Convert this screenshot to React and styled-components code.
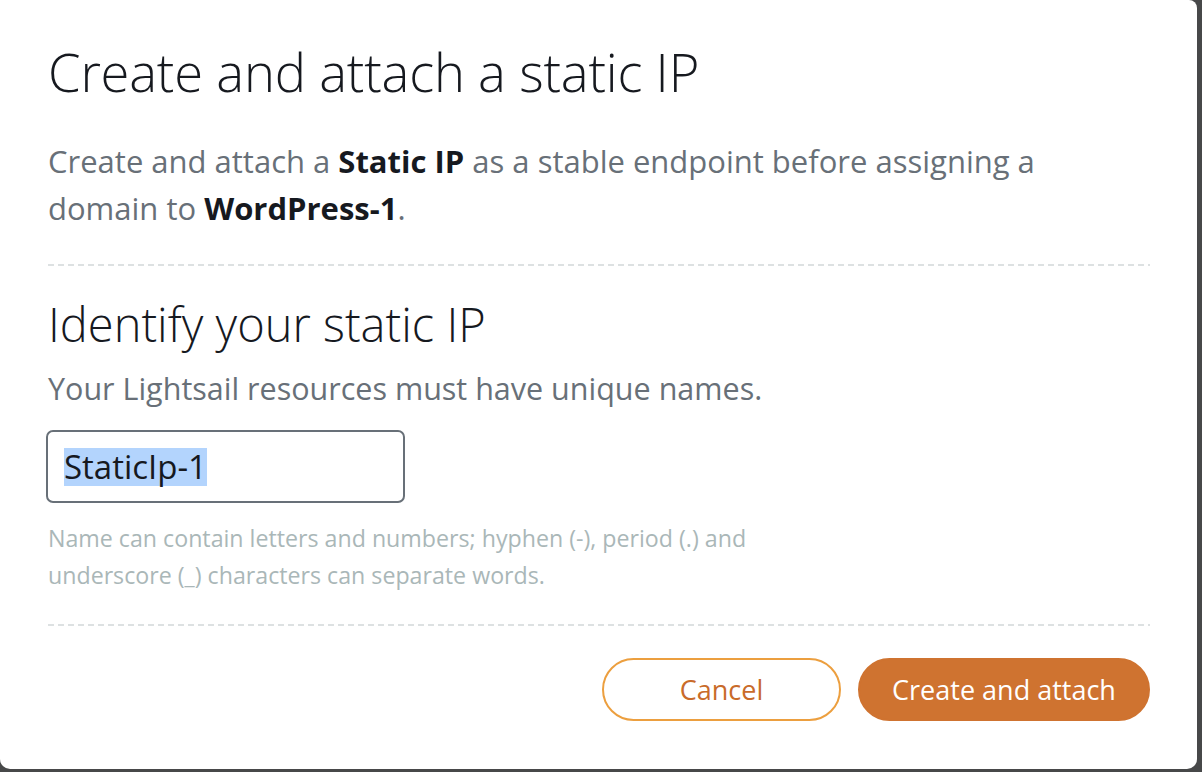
import React from "react";
import styled, { createGlobalStyle } from "styled-components";

const GlobalStyle = createGlobalStyle`
  html, body {
    margin: 0;
    padding: 0;
    background: #474849;
    overflow: hidden;
  }
  body {
    font-family: "Open Sans", "Noto Sans", sans-serif;
  }
`;

const Modal = styled.div`
  width: 1197px;
  height: 769px;
  box-sizing: border-box;
  background: #fff;
  border-radius: 0 8px 10px 10px;
  padding: 42px 47px 0 48px;
  display: flex;
  flex-direction: column;
`;

const Title = styled.h1`
  margin: 0;
  font-size: 52.5px;
  line-height: 60px;
  font-weight: 300;
  color: #16191f;
  letter-spacing: -0.2px;
`;

const Lead = styled.p`
  margin: 36px 0 0;
  font-size: 31px;
  line-height: 47px;
  color: #687078;

  b {
    color: #16191f;
    font-weight: 700;
  }
`;

const Divider = styled.div`
  height: 2px;
  flex-shrink: 0;
  margin-top: ${(p) => p.$gap}px;
  background-image: repeating-linear-gradient(
    to right,
    #dde1e2 0 6px,
    transparent 6px 10px
  );
`;

const SectionTitle = styled.h2`
  margin: 32px 0 0;
  font-size: 47px;
  line-height: 52px;
  font-weight: 300;
  color: #16191f;
`;

const Help = styled.p`
  margin: 18px 0 0;
  font-size: 30.5px;
  line-height: 40px;
  color: #687078;
`;

const Field = styled.div`
  margin: 22px 0 0 -2px;
  width: 359px;
  height: 73px;
  flex-shrink: 0;
  box-sizing: border-box;
  border: 2px solid #687078;
  border-radius: 7px;
  display: flex;
  align-items: center;
  padding-left: 16px;
  font-size: 33px;
  color: #16191f;
`;

const Selected = styled.span`
  display: inline-block;
  height: 38px;
  line-height: 38px;
  background: #b3d4fd;
`;

const Hint = styled.p`
  margin: 17px 0 0;
  font-size: 23.2px;
  line-height: 37px;
  color: #aab7b8;
`;

const Actions = styled.div`
  margin-top: 32px;
  display: flex;
  justify-content: flex-end;
  gap: 17px;
`;

const Button = styled.button`
  height: 63px;
  width: ${(p) => p.$width}px;
  box-sizing: border-box;
  border-radius: 32px;
  font-family: inherit;
  font-size: 27px;
  padding: 0;
  cursor: pointer;
  border: 2px solid ${(p) => (p.$primary ? "#cf7330" : "#ec9f3f")};
  background: ${(p) => (p.$primary ? "#cf7330" : "#fff")};
  color: ${(p) => (p.$primary ? "#fff" : "#c96b2a")};
`;

export default function App() {
  return (
    <>
      <GlobalStyle />
      <Modal>
        <Title>Create and attach a static IP</Title>
        <Lead>
          Create and attach a <b>Static IP</b> as a stable endpoint before assigning a
          <br />
          domain to <b>WordPress-1</b>.
        </Lead>
        <Divider $gap={32} />
        <SectionTitle>Identify your static IP</SectionTitle>
        <Help>Your Lightsail resources must have unique names.</Help>
        <Field>
          <Selected>StaticIp-1</Selected>
        </Field>
        <Hint>
          Name can contain letters and numbers; hyphen (-), period (.) and
          <br />
          underscore (_) characters can separate words.
        </Hint>
        <Divider $gap={30} />
        <Actions>
          <Button $width={239}>Cancel</Button>
          <Button $width={292} $primary>
            Create and attach
          </Button>
        </Actions>
      </Modal>
    </>
  );
}
